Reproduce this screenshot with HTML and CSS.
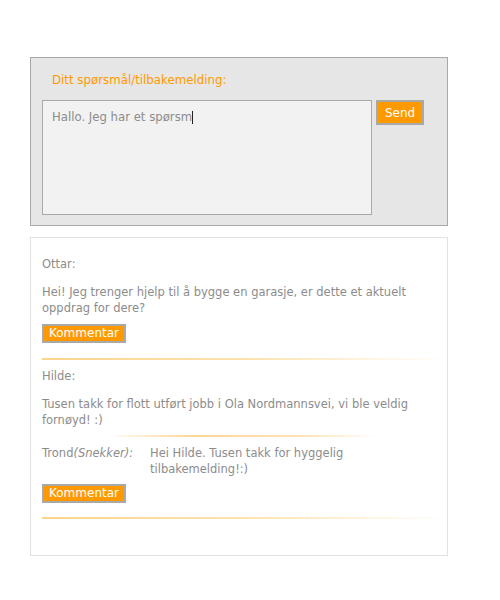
FILE: index.html
```html
<!DOCTYPE html>
<html>
<head>
<meta charset="utf-8">
<link rel="stylesheet" href="styles.css">
</head>
<body>
<div class="page">
  <form class="ask">
    <div class="ask-label">Ditt spørsmål/tilbakemelding:</div>
    <div class="ask-row">
      <div class="ask-input"><span>Hallo. Jeg har et spørsm</span><span class="caret"></span></div>
      <button type="button" class="btn send">Send</button>
    </div>
  </form>
  <div class="thread">
    <div class="post">
      <div class="author">Ottar:</div>
      <p class="msg">Hei! Jeg trenger hjelp til å bygge en garasje, er dette et aktuelt oppdrag for dere?</p>
      <button type="button" class="btn comment">Kommentar</button>
    </div>
    <div class="sep sep-between"></div>
    <div class="post">
      <div class="author">Hilde:</div>
      <p class="msg">Tusen takk for flott utført jobb i Ola Nordmannsvei, vi ble veldig fornøyd! :)</p>
      <div class="sep-mid"></div>
      <div class="reply">
        <div class="reply-author">Trond<em>(Snekker):</em></div>
        <div class="reply-text">Hei Hilde. Tusen takk for hyggelig tilbakemelding!:)</div>
      </div>
      <button type="button" class="btn comment comment-after-reply">Kommentar</button>
    </div>
    <div class="sep sep-last"></div>
  </div>
</div>
</body>
</html>
```
FILE: styles.css
```css
html, body {
  margin: 0;
  padding: 0;
  background: #fff;
}
body {
  font-family: "DejaVu Sans", "Noto Sans", sans-serif;
  font-size: 11.5px;
  color: #8c8c8c;
}
.page {
  padding: 57px 0 0 30px;
  width: 418px;
  display: flex;
  flex-direction: column;
  gap: 11px;
}
.ask {
  margin: 0;
  background: #e6e6e6;
  border: 1px solid #a9a9a9;
  padding: 13px 0 10px 11px;
}
.ask-label {
  color: #ff9900;
  font-size: 11.8px;
  line-height: 18px;
  padding-left: 10px;
  margin-bottom: 11px;
}
.ask-row {
  display: flex;
  align-items: flex-start;
  gap: 4px;
}
.ask-input {
  width: 309px;
  height: 94px;
  background: #f2f2f2;
  border: 1px solid #a9a9a9;
  padding: 8px 10px 11px 9px;
  font-size: 11.7px;
  line-height: 16px;
  color: #8c8c8c;
  display: flex;
  align-items: flex-start;
}
.caret {
  display: inline-block;
  width: 1px;
  height: 13px;
  background: #222;
  margin-top: 2px;
}
.btn {
  font-family: inherit;
  background: #ff9900;
  color: #fff;
  border: 2px solid #a9a9a9;
  padding: 0;
  margin: 0;
  cursor: pointer;
}
.send {
  width: 48px;
  height: 25px;
  font-size: 12px;
}
.thread {
  border: 1px solid #e2e2e2;
  height: 319px;
  box-sizing: border-box;
  padding: 18px 0 0 11px;
}
.post {
  display: flex;
  flex-direction: column;
  align-items: flex-start;
}
.author {
  line-height: 16px;
}
.msg {
  margin: 12px 0 0 0;
  line-height: 16px;
  width: 385px;
}
.comment {
  margin-top: 8px;
  width: 84px;
  height: 19px;
  font-size: 12px;
  line-height: 15px;
}
.comment-after-reply {
  margin-top: 7px;
}
.sep {
  height: 2px;
  margin-top: 15px;
  background: linear-gradient(to right, #fbd48c 0%, #fde2ae 50%, rgba(255,255,255,0) 100%);
}
.sep-between {
  margin-bottom: 8px;
}
.sep-last {
  margin-top: 14px;
}
.sep-mid {
  align-self: stretch;
  height: 2px;
  margin: 7px 70px 8px 73px;
  background: linear-gradient(to right, rgba(253,210,140,0.1) 0%, #fcd594 30%, #fde2b4 70%, rgba(255,255,255,0) 100%);
}
.reply {
  display: flex;
  line-height: 16px;
}
.reply-author {
  width: 108px;
  flex: none;
}
.reply-text {
  width: 230px;
}
```
